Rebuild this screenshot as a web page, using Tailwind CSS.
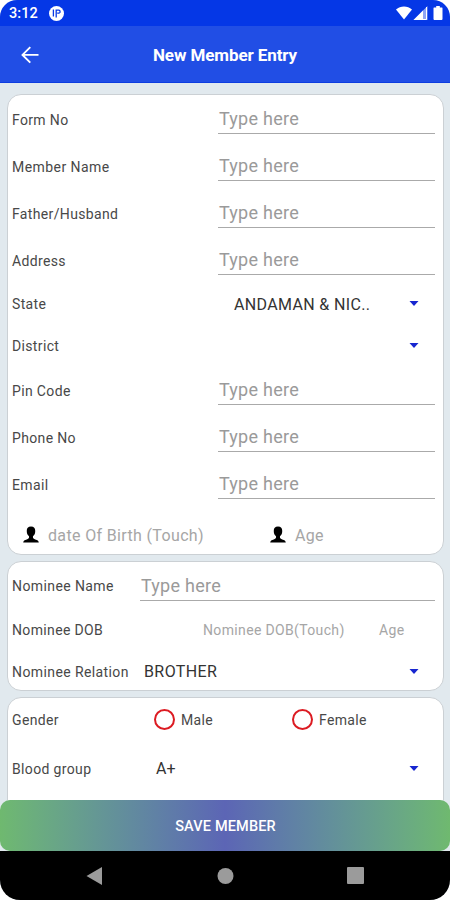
<!DOCTYPE html>
<html lang="en">
<head>
<meta charset="utf-8">
<title>New Member Entry</title>
<script src="https://cdn.jsdelivr.net/npm/@tailwindcss/browser@4"></script>
</head>
<body class="bg-white">
<svg class="hidden">
  <symbol id="person" viewBox="0 0 17 17"><path d="M8.500 0C5.300 0 4 1.900 4 4.700c0 2.500.9 4.500 2.400 5.600v1.500c0 1-.9 1.500-2.400 1.900C1.700 14.300.3 15 .2 17h16.600c-.1-2-1.500-2.700-3.800-3.300-1.500-.4-2.400-.9-2.400-1.900v-1.500C12.100 9.200 13 7.200 13 4.700 13 1.900 11.700 0 8.500 0Z"/></symbol>
  <symbol id="caret" viewBox="0 0 10 5"><path d="M.5 0h9L5 5Z"/></symbol>
</svg>
<div class="w-[450px] h-[900px] flex flex-col overflow-hidden rounded-t-[17px] rounded-b-[20px] bg-[#e1e9ee] font-['Roboto',sans-serif] text-[#484848]">
  <div class="h-[26px] shrink-0 bg-[#0537e6] flex items-center pl-[9px] pr-[7px] text-white">
    <span class="text-[14.5px] font-medium leading-none tracking-[0.1px] w-[40px] pt-[2px]">3:12</span>
    <svg class="w-[15px] h-[15px]" viewBox="0 0 15 15"><circle cx="7.500" cy="7.500" r="7.500" fill="#fff"/><path d="M4.400 3.600v6.800M7.200 11.500V4.200h2.600c1.700 0 1.700 3 0 3H8.200" fill="none" stroke="#0537e6" stroke-width="1.300"/></svg>
    <svg class="ml-auto w-[47px] h-[15px]" viewBox="0 0 47 15"><g fill="#fff"><path d="M0 3.500C4.500-.6 11.500-.6 16 3.500L8 13.500Z"/><path d="M17.500 14 31.500 0v14Z" opacity=".55"/><path d="M17.500 14 27 4.500V14Z"/><path d="M30.500 1v12.500H19" fill="none" stroke="#fff"/><path d="M38 1.500h2.200V0h3.600v1.500H46q.5 0 .5 1V13q0 1-1 1h-7q-1 0-1-1V2.500q0-1 .5-1Z"/></g></svg>
  </div>
  <header class="h-[57px] shrink-0 bg-[#214ee5] border-b border-[#0d3de0] grid grid-cols-[60px_1fr_60px] items-center pt-[2px] text-white">
    <svg class="ml-[21px] w-[18px] h-[18px]" viewBox="0 0 18 18" fill="none" stroke="#fff" stroke-width="1.900"><path d="M17.500 8.900H1.600M9.300 1.100 1.500 8.900l7.800 7.800"/></svg>
    <h1 class="text-center text-[17px] font-bold leading-none tracking-[-0.1px] pt-[1px] whitespace-nowrap">New Member Entry</h1>
  </header>
  <main class="flex-1 min-h-0 overflow-hidden px-[7px] pt-[11px] flex flex-col gap-[6px] text-[14px] leading-none tracking-[0.35px]">
    <section class="shrink-0 h-[461px] w-[437px] rounded-[14px] border border-[#cbd0d4] bg-white pl-[4px] pr-[8px] flex flex-col">
      <div class="h-[47px] flex items-center"><span class="w-[206px] pt-[2px]">Form No</span><div class="flex-1 h-[30px] border-b-[1.500px] border-[#aaa] pl-[1px] text-[18px] leading-[30px] tracking-[0.25px] text-[#9a9a9a]">Type here</div></div>
      <div class="h-[47px] flex items-center"><span class="w-[206px] pt-[2px] tracking-[0.45px]">Member Name</span><div class="flex-1 h-[30px] border-b-[1.500px] border-[#aaa] pl-[1px] text-[18px] leading-[30px] tracking-[0.25px] text-[#9a9a9a]">Type here</div></div>
      <div class="h-[47px] flex items-center"><span class="w-[206px] pt-[2px]">Father/Husband</span><div class="flex-1 h-[30px] border-b-[1.500px] border-[#aaa] pl-[1px] text-[18px] leading-[30px] tracking-[0.25px] text-[#9a9a9a]">Type here</div></div>
      <div class="h-[47px] flex items-center"><span class="w-[206px] pt-[2px]">Address</span><div class="flex-1 h-[30px] border-b-[1.500px] border-[#aaa] pl-[1px] text-[18px] leading-[30px] tracking-[0.25px] text-[#9a9a9a]">Type here</div></div>
      <div class="h-[41px] flex items-center"><span class="w-[222px]">State</span><span class="text-[16px] tracking-[0.35px] text-[#333] pt-[2px]">ANDAMAN &amp; NIC..</span><svg class="ml-auto mr-[16px] w-[10px] h-[5px] fill-[#1726d0]"><use href="#caret"/></svg></div>
      <div class="h-[42px] flex items-center"><span class="w-[222px] pt-[1px]">District</span><svg class="ml-auto mr-[16px] w-[10px] h-[5px] fill-[#1726d0]"><use href="#caret"/></svg></div>
      <div class="h-[47px] flex items-center"><span class="w-[206px] pt-[3px]">Pin Code</span><div class="flex-1 h-[30px] border-b-[1.500px] border-[#aaa] pl-[1px] text-[18px] leading-[30px] tracking-[0.25px] text-[#9a9a9a]">Type here</div></div>
      <div class="h-[47px] flex items-center"><span class="w-[206px] pt-[3px]">Phone No</span><div class="flex-1 h-[30px] border-b-[1.500px] border-[#aaa] pl-[1px] text-[18px] leading-[30px] tracking-[0.25px] text-[#9a9a9a]">Type here</div></div>
      <div class="h-[47px] flex items-center"><span class="w-[206px] pt-[3px]">Email</span><div class="flex-1 h-[30px] border-b-[1.500px] border-[#aaa] pl-[1px] text-[18px] leading-[30px] tracking-[0.25px] text-[#9a9a9a]">Type here</div></div>
      <div class="flex-1 flex items-center pt-[8px] pl-[11px] text-[16px] text-[#a6a6a6]">
        <svg class="w-[16px] h-[17px] mr-[9px] fill-black"><use href="#person"/></svg><span class="w-[222px] pt-[2px]">date Of Birth (Touch)</span>
        <svg class="w-[16px] h-[17px] mr-[9px] fill-black"><use href="#person"/></svg><span class="pt-[2px]">Age</span>
      </div>
    </section>
    <section class="shrink-0 h-[130px] w-[437px] rounded-[14px] border border-[#cbd0d4] bg-white pl-[4px] pr-[8px] flex flex-col">
      <div class="h-[47px] flex items-center"><span class="w-[128px] pt-[1px] tracking-[0.4px]">Nominee Name</span><div class="flex-1 h-[30px] border-b-[1.500px] border-[#aaa] pl-[1px] text-[18px] leading-[30px] tracking-[0.25px] text-[#9a9a9a]">Type here</div></div>
      <div class="h-[40px] flex items-center pt-[2px]"><span class="w-[191px]">Nominee DOB</span><span class="w-[176px] text-[#a6a6a6]">Nominee DOB(Touch)</span><span class="text-[#a6a6a6]">Age</span></div>
      <div class="h-[41px] flex items-center pt-[4px]"><span class="w-[132px] tracking-[0.4px]">Nominee Relation</span><span class="text-[16px] tracking-[0.4px] text-[#333]">BROTHER</span><svg class="ml-auto mr-[16px] w-[10px] h-[5px] fill-[#1726d0]"><use href="#caret"/></svg></div>
    </section>
    <section class="shrink-0 h-[130px] w-[437px] rounded-[14px] border border-[#cbd0d4] bg-white pl-[4px] pr-[8px] flex flex-col">
      <div class="h-[43px] flex items-center"><span class="w-[142px]">Gender</span><i class="w-[21px] h-[21px] rounded-full border-2 border-[#dc1b22] mr-[6px]"></i><span class="w-[111px]">Male</span><i class="w-[21px] h-[21px] rounded-full border-2 border-[#dc1b22] mr-[6px]"></i><span>Female</span></div>
      <div class="h-[55px] flex items-center"><span class="w-[144px]">Blood group</span><span class="text-[16px] tracking-normal text-[#333]">A+</span><svg class="ml-auto mr-[16px] w-[10px] h-[5px] fill-[#1726d0]"><use href="#caret"/></svg></div>
    </section>
  </main>
  <button class="h-[51px] shrink-0 rounded-[10px] bg-linear-to-r from-[#6fb96f] via-[#5c65b5] to-[#6fb96f] text-white text-[14.500px] pt-[3px] pl-[1px] font-medium leading-none tracking-[0.15px]">SAVE MEMBER</button>
  <nav class="h-[49px] shrink-0 bg-black">
    <svg class="w-[450px] h-[49px]" viewBox="0 0 450 49" fill="#9b9b9b"><path d="M86.500 25 102 16v18Z"/><circle cx="225.500" cy="25" r="8"/><rect x="347" y="16" width="17" height="17" rx="1"/></svg>
  </nav>
</div>
</body>
</html>
